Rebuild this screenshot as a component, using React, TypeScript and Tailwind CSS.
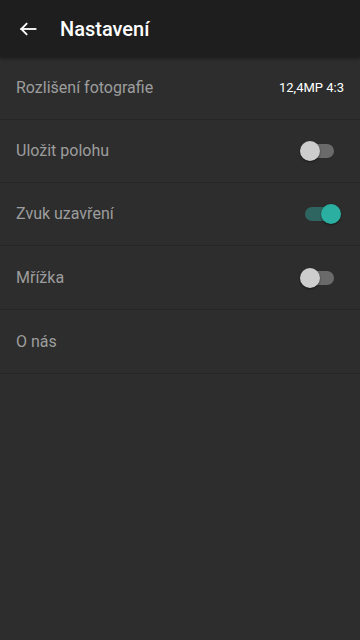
import React, { useState } from 'react';

function Toggle({ on, onClick }: { on: boolean; onClick: () => void }) {
  return (
    <button type="button" onClick={onClick} className="relative w-[42px] h-[22px] flex items-center">
      <span
        className={`absolute h-[14px] rounded-full ${on ? 'left-[6px] right-[4px] bg-[#2f6560]' : 'left-[6px] right-[8px] bg-[#6a6a6a]'}`}
      />
      <span
        className={`absolute top-px w-[20px] h-[20px] rounded-full shadow-[0_1px_2px_rgba(0,0,0,0.5)] ${
          on ? 'left-[22px] bg-[#2bafa0]' : 'left-0 bg-[#cdcdcd]'
        }`}
      />
    </button>
  );
}

export default function App() {
  const [location, setLocation] = useState(false);
  const [sound, setSound] = useState(true);
  const [grid, setGrid] = useState(false);

  return (
    <div className="w-[360px] h-[640px] bg-[#2d2d2d] flex flex-col font-['Roboto',sans-serif]">
      <div className="h-[57px] bg-[#1e1e1e] flex items-center shadow-[0_2px_3px_rgba(0,0,0,0.3)] shrink-0">
        <button type="button" className="w-[56px] h-[56px] flex items-center justify-center">
          <svg width="20" height="20" viewBox="0 0 24 24" fill="none" stroke="white" strokeWidth="2.2" strokeLinecap="square">
            <path d="M21 12H4" />
            <path d="M11 5l-7 7 7 7" strokeLinecap="butt" />
          </svg>
        </button>
        <h1 className="ml-1 text-white text-[20px] font-medium">Nastavení</h1>
      </div>

      <div className="h-[63px] flex items-center justify-between pl-4 pr-4 border-b border-[#262626]">
        <span className="text-[#9d9d9d] text-[16px]">Rozlišení fotografie</span>
        <span className="text-white text-[13px]">12,4MP 4:3</span>
      </div>
      <div className="h-[63px] flex items-center justify-between pl-4 pr-[18px] border-b border-[#262626]">
        <span className="text-[#9d9d9d] text-[16px]">Uložit polohu</span>
        <Toggle on={location} onClick={() => setLocation(!location)} />
      </div>
      <div className="h-[63px] flex items-center justify-between pl-4 pr-[19px] border-b border-[#262626]">
        <span className="text-[#9d9d9d] text-[16px]">Zvuk uzavření</span>
        <Toggle on={sound} onClick={() => setSound(!sound)} />
      </div>
      <div className="h-[64px] flex items-center justify-between pl-4 pr-[18px] border-b border-[#262626]">
        <span className="text-[#9d9d9d] text-[16px]">Mřížka</span>
        <Toggle on={grid} onClick={() => setGrid(!grid)} />
      </div>
      <div className="h-[64px] flex items-center pl-4 border-b border-[#262626]">
        <span className="text-[#9d9d9d] text-[16px]">O nás</span>
      </div>
    </div>
  );
}
